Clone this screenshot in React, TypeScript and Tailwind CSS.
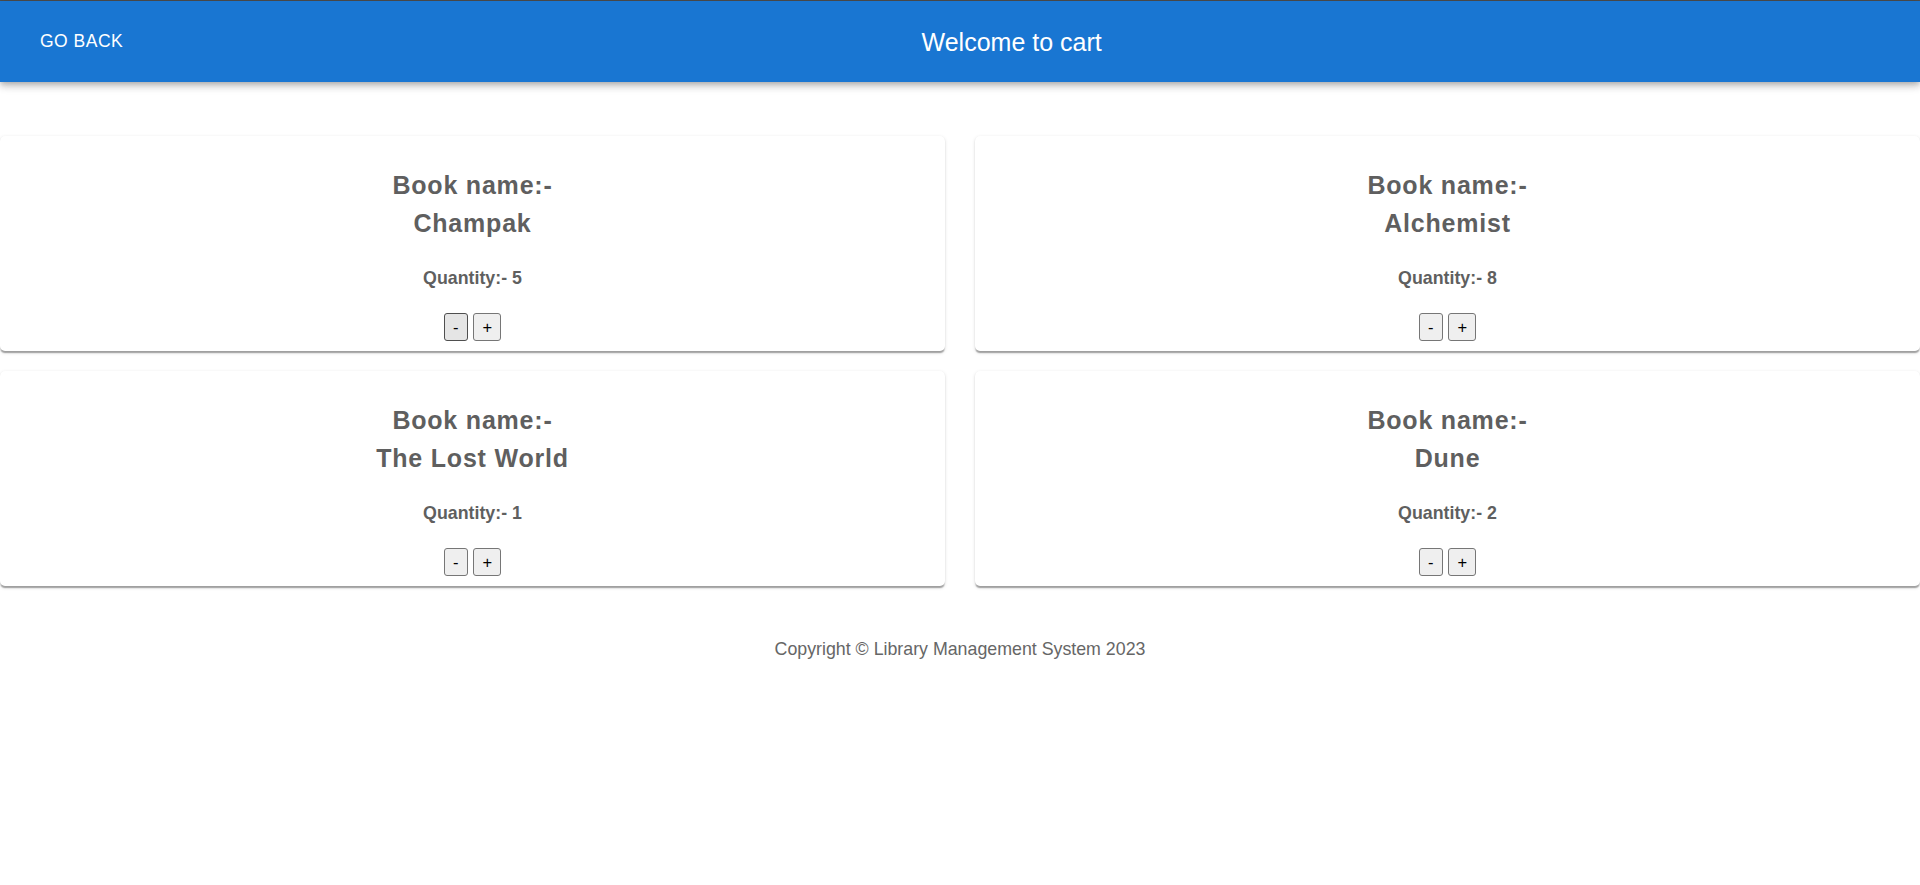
import React from "react";

const books = [
  { name: "Champak", qty: 5, active: true },
  { name: "Alchemist", qty: 8, active: false },
  { name: "The Lost World", qty: 1, active: false },
  { name: "Dune", qty: 2, active: false },
];

function Card({ name, qty, active }: { name: string; qty: number; active: boolean }) {
  return (
    <div className="bg-white rounded-[5px] shadow-[0_2.5px_1.25px_-1.25px_rgba(0,0,0,0.2),0_1.25px_1.25px_0_rgba(0,0,0,0.14),0_1.25px_3.75px_0_rgba(0,0,0,0.12)] flex flex-col items-center pt-[31px] pb-[10px]">
      <div className="text-[25px] leading-[37.5px] font-bold text-[#5f5f5f] tracking-[0.8px] text-center">
        <div>Book name:-</div>
        <div>{name}</div>
      </div>
      <div className="mt-[23px] text-[17.8px] leading-[26px] font-bold text-[#5f5f5f]">
        Quantity:- {qty}
      </div>
      <div className="mt-[22px] flex gap-[5.5px]">
        <button
          className={
            active
              ? "w-[24px] h-[28px] rounded-[3px] border border-[#4f4f4f] bg-[#e5e5e5] text-[16.5px] leading-none text-black flex items-center justify-center"
              : "w-[24px] h-[28px] rounded-[3px] border border-[#767676] bg-[#efefef] text-[16.5px] leading-none text-black flex items-center justify-center"
          }
        >
          -
        </button>
        <button className="w-[28px] h-[28px] rounded-[3px] border border-[#767676] bg-[#efefef] text-[16.5px] leading-none text-black flex items-center justify-center">
          +
        </button>
      </div>
    </div>
  );
}

export default function App() {
  return (
    <div className="min-h-[885px] bg-white font-['Liberation_Sans',Arial,sans-serif]">
      <div className="h-px bg-[#4d4d4d]" />
      <header className="relative z-10 h-[81px] bg-[#1976d2] text-white flex items-center px-[30px] shadow-[0_2.5px_5px_-1.25px_rgba(0,0,0,0.2),0_5px_6.25px_0_rgba(0,0,0,0.14),0_1.25px_12.5px_0_rgba(0,0,0,0.12)]">
        <button className="px-[10px] py-[7.5px] text-[17.5px] tracking-[0.5px] uppercase leading-[1.75]">
          GO BACK
        </button>
        <div className="flex-1 text-center text-[25px] leading-[1.6]">Welcome to cart</div>
      </header>
      <main className="mt-[54px] grid grid-cols-2 gap-x-[30px] gap-y-[20px]">
        {books.map((b) => (
          <Card key={b.name} {...b} />
        ))}
      </main>
      <footer className="mt-[51px] text-center text-[17.8px] leading-[25px] text-[#666666]">
        Copyright © Library Management System 2023
      </footer>
    </div>
  );
}
